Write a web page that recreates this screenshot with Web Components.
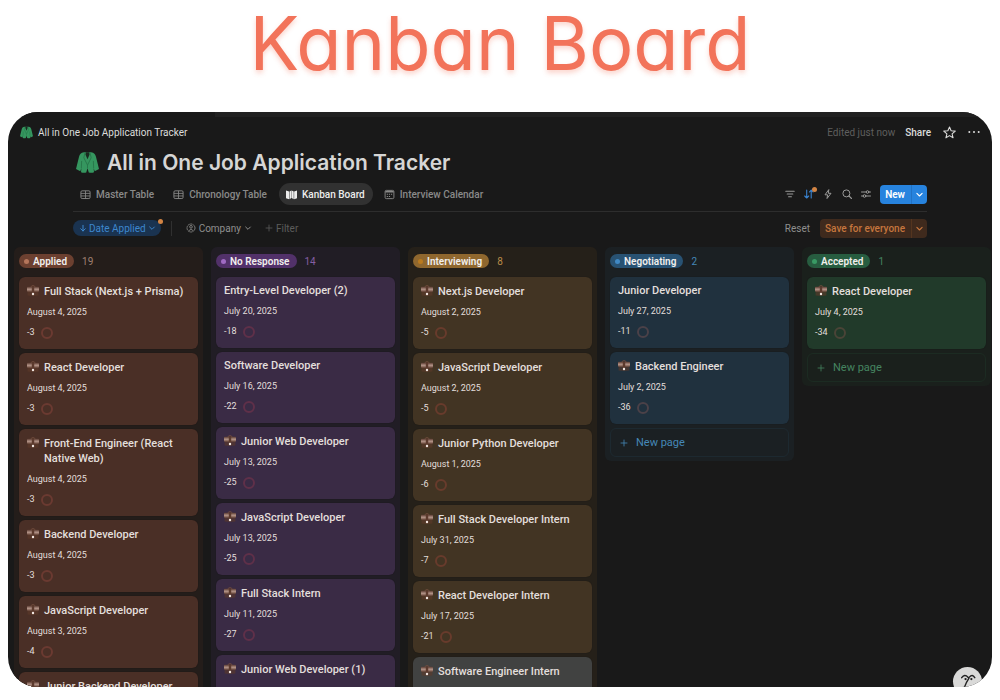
<!DOCTYPE html>
<html lang="en">
<head>
<meta charset="utf-8">
<title>Kanban Board</title>
<style>
  html, body { margin: 0; height: 100%; background: #fff; }
  body { font-family: Roboto, "Liberation Sans", sans-serif; }
</style>
</head>
<body>
<kb-page></kb-page>

<script>
const ICONS = {
  coat: `<svg viewBox="0 0 22 21"><path fill="#35965f" d="M7.600 .6H14.400C17.400 1.100 18.400 2.200 19.100 5L22 16.800 17.900 18.800 16.900 16 17.200 19.900Q14.500 20.800 12.200 20L11 16 9.800 20Q7.500 20.800 4.800 19.900L5.100 16 4.100 18.800 0 16.800 2.900 5C3.600 2.200 4.600 1.100 7.600 .6Z"/><path fill="#1a2a20" d="M9.300 .6H12.700L12.900 3 11 7.500 9.100 3Z"/><path d="M8.600 1 7.500 6 11 13V16M13.400 1 14.500 6 11 13M5.100 16 5.400 9M16.900 16 16.600 9" fill="none" stroke="#257247" stroke-width=".8"/></svg>`,
  table: `<svg viewBox="0 0 12 12"><rect x="1" y="2" width="10" height="8.400" rx="1.300" fill="none" stroke="currentColor"/><path d="M1 4.800H11M1 7.600H11M6 2V10.400" stroke="currentColor" stroke-width=".9"/></svg>`,
  map: `<svg viewBox="0 0 12 12"><path fill="currentColor" d="M0 1.600 3.400 2.600V11.200L0 10ZM3.900 2.600 5.800 1.600V9.800L3.900 11.200ZM6.200 1.600 8.400 2.600V11.200L6.200 9.800ZM8.900 2.600 12 1.600V10L8.900 11.200Z"/></svg>`,
  calendar: `<svg viewBox="0 0 12 12"><rect x="1.200" y="1.500" width="9.600" height="9" rx="1.300" fill="none" stroke="currentColor"/><path d="M1.500 3H10.500" stroke="currentColor" stroke-width="1.600"/><path d="M3 5.800H9M3 8.200H7" stroke="currentColor" stroke-width="1.200" stroke-dasharray="1.300 1"/></svg>`,
  lines: `<svg viewBox="0 0 12 12"><path d="M1.800 3.300H10.200M3.200 6H8.800M4.600 8.700H7.400" stroke="currentColor" stroke-width="1.100" stroke-linecap="round"/></svg>`,
  sort: `<svg viewBox="0 0 12 12"><path d="M3.700 2V10M1.700 8 3.700 10 5.700 8M8.200 10V2M6.400 4 8.200 2 10 4" fill="none" stroke="currentColor" stroke-width="1.100" stroke-linecap="round" stroke-linejoin="round"/></svg>`,
  bolt: `<svg viewBox="0 0 12 12"><path d="M6.800 1.600 3 6.800H5.600L5 10.500 9 5.300H6.300Z" fill="none" stroke="currentColor" stroke-linejoin="round"/></svg>`,
  search: `<svg viewBox="0 0 12 12"><circle cx="5.400" cy="5.400" r="3.500" fill="none" stroke="currentColor"/><path d="M8 8 10.500 10.500" stroke="currentColor" stroke-width="1.100" stroke-linecap="round"/></svg>`,
  sliders: `<svg viewBox="0 0 12 12"><g fill="none" stroke="currentColor" stroke-linecap="round"><path d="M1.500 4H6M9 4H10.500M1.500 8H3M6 8H10.500"/><circle cx="7.500" cy="4" r="1.300"/><circle cx="4.500" cy="8" r="1.300"/></g></svg>`,
  chevron: `<svg viewBox="0 0 12 12"><path d="M2.500 4.500 6 8 9.500 4.500" fill="none" stroke="currentColor" stroke-width="1.500" stroke-linecap="round" stroke-linejoin="round"/></svg>`,
  down: `<svg viewBox="0 0 12 12"><path d="M6 2V10.500M2.600 7.200 6 10.500 9.400 7.200" fill="none" stroke="currentColor" stroke-width="1.500" stroke-linecap="round" stroke-linejoin="round"/></svg>`,
  person: `<svg viewBox="0 0 12 12"><circle cx="6" cy="6" r="4.800" fill="none" stroke="currentColor" stroke-dasharray="2.500 .5"/><circle cx="6" cy="4.600" r="1.600" fill="none" stroke="currentColor"/><path d="M3.300 9.200Q6 6 8.700 9.200" fill="none" stroke="currentColor"/></svg>`,
  plus: `<svg viewBox="0 0 12 12"><path d="M6 1.500V10.500M1.500 6H10.500" stroke="currentColor" stroke-width="1.200" stroke-linecap="round"/></svg>`,
  star: `<svg viewBox="0 0 12 12"><path d="M6 .9 7.500 4.400 11.300 4.700 8.400 7.200 9.300 10.900 6 8.900 2.700 10.900 3.600 7.200 .7 4.700 4.500 4.400Z" fill="none" stroke="currentColor" stroke-linejoin="round"/></svg>`,
  dots: `<svg viewBox="0 0 12 12"><g fill="currentColor"><circle cx="1.300" cy="6" r="1"/><circle cx="6" cy="6" r="1"/><circle cx="10.700" cy="6" r="1"/></g></svg>`,
  briefcase: `<svg viewBox="0 0 12 12"><defs><linearGradient id="g" x1="0" y1="0" x2="0" y2="1"><stop offset="0" stop-color="#5a3a30"/><stop offset=".5" stop-color="#b39488"/><stop offset="1" stop-color="#6e4c3f"/></linearGradient></defs><path d="M4 2Q4 .7 6 .7T8 2" fill="none" stroke="#76503f" stroke-width=".9"/><path d="M.6 6H11.400V10.600Q6 11.400 .6 10.600Z" fill="#5e3a2a" opacity=".6"/><rect x="0" y="1.800" width="12" height="5" rx=".8" fill="url(#g)"/><path d="M4.800 1.800H7.200V8L6 9.500 4.800 8Z" fill="#5c3a2d"/><circle cx="6" cy="9" r="1.200" fill="#f3e9e3"/></svg>`,
  face: `<svg viewBox="0 0 30 30"><g fill="none" stroke="#222" stroke-width="1.500" stroke-linecap="round"><path d="M9 11Q12 7 15.500 10.500M17 10.500Q20 7 22.500 11M16.500 11.500Q13 17 11.500 22"/></g><circle cx="13" cy="12.500" r="1.200" fill="#222"/><circle cx="19" cy="12.500" r="1.200" fill="#222"/></svg>`
};

function define(name, css, html) {
  const tpl = document.createElement('template');
  customElements.define(name, class extends HTMLElement {
    connectedCallback() {
      if (this.shadowRoot) return;
      tpl.innerHTML = `<style>*{box-sizing:border-box}button{font:inherit;color:inherit;background:none;border:0;padding:0;margin:0;white-space:nowrap}${css}</style>${typeof html === 'function' ? html(this) : html}`;
      this.attachShadow({ mode: 'open' }).append(tpl.content.cloneNode(true));
    }
  });
}

define('kb-icon',
  `:host{display:block;flex:none;width:var(--size,12px);height:var(--size,12px)}svg{display:block;width:100%;height:100%}`,
  el => ICONS[el.getAttribute('name')]);

define('kb-tab',
  `:host{display:block}
   button{display:flex;align-items:center;gap:5px;height:22px;padding:0 8px 0 7px;border-radius:11px;font-size:10px;font-weight:500;color:#8a8a89}
   :host([active]) button{background:#313131;color:#ededec}
   kb-icon{--size:11px}`,
  el => `<button role="tab" aria-selected="${el.hasAttribute('active')}"><kb-icon name="${el.getAttribute('icon')}"></kb-icon><slot></slot></button>`);

define('kb-split',
  `:host{display:flex;height:19px;border-radius:4px;overflow:hidden;background:var(--bg);color:var(--fg);font-size:10px;font-weight:var(--weight,500)}
   .main{padding:0 6px 0 5px}
   .more{display:grid;place-items:center;width:16px;border-left:1px solid var(--line)}
   kb-icon{--size:9px}`,
  `<button class="main"><slot></slot></button><button class="more" aria-label="More options"><kb-icon name="chevron"></kb-icon></button>`);

define('kb-topbar',
  `:host{display:flex;align-items:center;height:30px;padding:0 12px 0 12px;font-size:10px;color:#dcdcdb}
   a{display:flex;align-items:center;gap:5px;color:inherit;text-decoration:none}
   a kb-icon{--size:13px}
   .right{display:flex;align-items:center;margin-left:auto}
   .edited{color:#5f5f5e;margin-right:10px}
   .share{font-weight:500;margin-right:12px}
   .star{--size:13px;margin-right:12px}`,
  `<a href="#"><kb-icon name="coat"></kb-icon><span>All in One Job Application Tracker</span></a>
   <div class="right"><span class="edited">Edited just now</span><button class="share">Share</button>
   <button aria-label="Favorite"><kb-icon class="star" name="star"></kb-icon></button><button aria-label="More"><kb-icon name="dots"></kb-icon></button></div>`);

define('kb-header',
  `:host{display:block;padding:0 65px}
   .row{display:flex;align-items:center}
   h2{display:flex;align-items:center;gap:8px;height:31px;margin:0 0 0 3px;font-family:Inter,sans-serif;font-size:21px;font-weight:600;color:#d6d6d5;white-space:nowrap}
   h2 kb-icon{--size:23px}
   .tabs{height:34px;padding-bottom:1px;border-bottom:1px solid #2d2d2d;gap:4px}
   .tools{margin-left:auto;display:flex;align-items:center;gap:7px;color:#9a9a99}
   .tools button{position:relative}
   .on{color:#3a83cf}
   .badge{position:absolute;top:-1px;right:-2px;width:5px;height:5px;border-radius:50%;background:#d28444}
   .tools kb-split{--bg:#2783de;--fg:#fff;--line:#2272c4;--weight:600;margin-left:1px}
   .filters{height:32px;font-size:10px;color:#8f8f8e}
   .date{position:relative;display:flex;align-items:center;gap:2px;height:16px;padding:0 5px 0 6px;border-radius:8px;background:#1a3350;color:#3d87ce}
   .date kb-icon,.company .chev{--size:8px}
   .sep{width:1px;height:15px;background:#303030;margin:0 14px 0 10px}
   .company{display:flex;align-items:center;gap:3px}
   .company kb-icon{--size:10px}
   .company .chev{--size:8px}
   .add{display:flex;align-items:center;gap:3px;color:#5c5c5b;margin-left:13px}
   .add kb-icon{--size:8px}
   .reset{margin-left:auto;margin-right:10px}
   .filters kb-split{--bg:#3f2a1d;--fg:#c6763e;--line:#54351f}`,
  `<h2><kb-icon name="coat"></kb-icon><span>All in One Job Application Tracker</span></h2>
   <div class="row tabs" role="tablist">
     <kb-tab icon="table">Master Table</kb-tab><kb-tab icon="table">Chronology Table</kb-tab><kb-tab icon="map" active>Kanban Board</kb-tab><kb-tab icon="calendar">Interview Calendar</kb-tab>
     <div class="tools">
       <button aria-label="Filter"><kb-icon name="lines"></kb-icon></button>
       <button aria-label="Sort" class="on"><kb-icon name="sort"></kb-icon><i class="badge"></i></button>
       <button aria-label="Automations"><kb-icon name="bolt"></kb-icon></button>
       <button aria-label="Search"><kb-icon name="search"></kb-icon></button>
       <button aria-label="Settings"><kb-icon name="sliders"></kb-icon></button>
       <kb-split>New</kb-split>
     </div>
   </div>
   <div class="row filters">
     <button class="date"><kb-icon name="down"></kb-icon>Date Applied<kb-icon name="chevron"></kb-icon><i class="badge"></i></button>
     <span class="sep"></span>
     <button class="company"><kb-icon name="person"></kb-icon>Company<kb-icon class="chev" name="chevron"></kb-icon></button>
     <button class="add"><kb-icon name="plus"></kb-icon>Filter</button>
     <button class="reset">Reset</button>
     <kb-split>Save for everyone</kb-split>
   </div>`);

define('kb-card',
  `:host{display:block;min-height:71px;padding:7px 8px 10px;border-radius:6px;background:var(--card);color:#e3dfdc;box-shadow:0 0 1px #0006}
   :host([hovered]){background:#414241}
   .title{display:flex;gap:5px;margin:0 0 7px;font-size:11px;line-height:14px;font-weight:500}
   .title.with-icon{line-height:15px}
   kb-icon{margin-top:1px}
   .date,.left{font-size:9px;line-height:13px}
   .date{margin-bottom:7px}
   .left{display:flex;align-items:center;gap:6px}
   .ring{width:12px;height:12px;border:2px solid var(--ring);border-radius:50%}`,
  el => {
    const icon = !el.hasAttribute('plain');
    const date = el.getAttribute('date');
    return `<h4 class="title ${icon ? 'with-icon' : ''}">${icon ? '<kb-icon name="briefcase"></kb-icon>' : ''}<span><slot></slot></span></h4>
    ${date ? `<div class="date">${date}</div><div class="left"><span>${el.getAttribute('days')}</span><i class="ring"></i></div>` : ''}`;
  });

define('kb-column',
  `:host{display:block;padding:7px 5px 4px;border-radius:6px;background:var(--col)}
   header{display:flex;align-items:center;gap:8px;height:14px;margin-bottom:9px}
   h3{display:flex;align-items:center;gap:4px;height:14px;margin:0;padding:0 7px 0 5px;border-radius:7px;background:var(--pill);color:#f1efed;font-size:10px;font-weight:600;white-space:nowrap}
   h3 i{width:5px;height:5px;border-radius:50%;background:var(--dot)}
   .count{font-size:10px;color:var(--accent)}
   .cards{display:grid;gap:4px}
   .new{display:flex;align-items:center;gap:8px;height:29px;padding:0 9px;border:1px solid var(--line);border-radius:6px;color:var(--accent);font-size:11px}
   .new kb-icon{--size:8px}`,
  el => `<header><h3><i></i>${el.getAttribute('label')}</h3><span class="count">${el.getAttribute('count')}</span></header>
   <div class="cards"><slot></slot>${el.hasAttribute('open') ? '<button class="new"><kb-icon name="plus"></kb-icon>New page</button>' : ''}</div>`);

define('kb-board',
  `:host{display:grid;grid-template-columns:repeat(5,minmax(0,1fr));gap:8px;align-items:start;padding:3px 1px 0 6px}
   .applied{--col:#241d1a;--card:#4a2f26;--pill:#6c4030;--dot:#b5765b;--accent:#a08072;--ring:#6b3a31}
   .none{--col:#211d25;--card:#3a2b45;--pill:#52316a;--dot:#a06bc4;--accent:#855fa3;--ring:#5f3049}
   .interview{--col:#252019;--card:#423423;--pill:#8f672e;--dot:#b97a1f;--accent:#b98b48;--ring:#683b2c}
   .negotiate{--col:#1b2023;--card:#20313e;--pill:#285273;--dot:#4089c4;--accent:#4588b8;--ring:#4b4148;--line:#1d2930}
   .accepted{--col:#1a201c;--card:#213a2a;--pill:#275d40;--dot:#399a64;--accent:#458460;--ring:#4a4437;--line:#1c2b22}`,
  `<kb-column class="applied" label="Applied" count="19">
     <kb-card date="August 4, 2025" days="-3">Full Stack (Next.js + Prisma)</kb-card>
     <kb-card date="August 4, 2025" days="-3">React Developer</kb-card>
     <kb-card date="August 4, 2025" days="-3">Front-End Engineer (React Native Web)</kb-card>
     <kb-card date="August 4, 2025" days="-3">Backend Developer</kb-card>
     <kb-card date="August 3, 2025" days="-4">JavaScript Developer</kb-card>
     <kb-card>Junior Backend Developer</kb-card>
   </kb-column>
   <kb-column class="none" label="No Response" count="14">
     <kb-card plain date="July 20, 2025" days="-18">Entry-Level Developer (2)</kb-card>
     <kb-card plain date="July 16, 2025" days="-22">Software Developer</kb-card>
     <kb-card date="July 13, 2025" days="-25">Junior Web Developer</kb-card>
     <kb-card date="July 13, 2025" days="-25">JavaScript Developer</kb-card>
     <kb-card date="July 11, 2025" days="-27">Full Stack Intern</kb-card>
     <kb-card>Junior Web Developer (1)</kb-card>
   </kb-column>
   <kb-column class="interview" label="Interviewing" count="8">
     <kb-card date="August 2, 2025" days="-5">Next.js Developer</kb-card>
     <kb-card date="August 2, 2025" days="-5">JavaScript Developer</kb-card>
     <kb-card date="August 1, 2025" days="-6">Junior Python Developer</kb-card>
     <kb-card date="July 31, 2025" days="-7">Full Stack Developer Intern</kb-card>
     <kb-card date="July 17, 2025" days="-21">React Developer Intern</kb-card>
     <kb-card hovered>Software Engineer Intern</kb-card>
   </kb-column>
   <kb-column class="negotiate" label="Negotiating" count="2" open>
     <kb-card plain date="July 27, 2025" days="-11">Junior Developer</kb-card>
     <kb-card date="July 2, 2025" days="-36">Backend Engineer</kb-card>
   </kb-column>
   <kb-column class="accepted" label="Accepted" count="1" open>
     <kb-card date="July 4, 2025" days="-34">React Developer</kb-card>
   </kb-column>`);

define('kb-window',
  `:host{display:block;position:relative;overflow:hidden;border-radius:30px;background:#191919}
   .strip{height:5px;background:linear-gradient(90deg,#191919 207px,#212121 207px)}
   .help{position:absolute;right:10px;bottom:-9px;width:29px;height:29px;border-radius:50%;background:#d9d9d8}
   .help kb-icon{--size:29px}`,
  `<div class="strip"></div><slot></slot><button class="help" aria-label="Assistant"><kb-icon name="face"></kb-icon></button>`);

define('kb-page',
  `:host{display:flex;flex-direction:column;height:100vh;padding:0 8px 13px;box-sizing:border-box}
   h1{flex:none;height:112px;margin:0;font-family:Inter,sans-serif;line-height:86px;font-size:74px;font-weight:400;text-align:center;color:#f2735a;font-feature-settings:"cv11";text-shadow:0 3px 5px #f2735a4d;white-space:nowrap}
   kb-window{flex:1;min-height:0}`,
  `<h1>Kanban Board</h1>
   <kb-window><kb-topbar></kb-topbar><kb-header></kb-header><kb-board></kb-board></kb-window>`);
</script>
</body>
</html>
